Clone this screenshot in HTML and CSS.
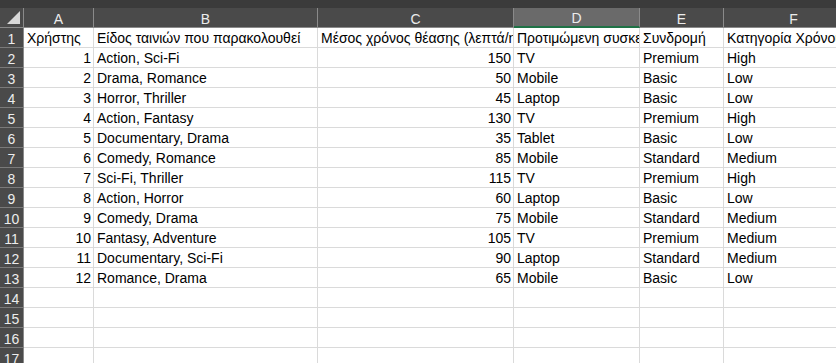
FILE: index.html
```html
<!DOCTYPE html>
<html lang="el">
<head>
  <meta charset="UTF-8" />
  <meta name="viewport" content="width=device-width, initial-scale=1.0"/>
  <title>Sheet1</title>
  <link rel="stylesheet" href="styles.css">
</head>
<body>
  <div class="topbar"></div>
  <div class="sheet" id="sheet">
    <div class="corner"><span class="corner-tri"></span></div>
    <div class="colhead">A</div>
    <div class="colhead">B</div>
    <div class="colhead">C</div>
    <div class="colhead active">D</div>
    <div class="colhead">E</div>
    <div class="colhead">F</div>
  </div>

  <script>
    const rows = [
      ["Χρήστης", "Είδος ταινιών που παρακολουθεί", "Μέσος χρόνος θέασης (λεπτά/ημέρα)", "Προτιμώμενη συσκευή", "Συνδρομή", "Κατηγορία Χρόνου Θέασης"],
      [1, "Action, Sci-Fi", 150, "TV", "Premium", "High"],
      [2, "Drama, Romance", 50, "Mobile", "Basic", "Low"],
      [3, "Horror, Thriller", 45, "Laptop", "Basic", "Low"],
      [4, "Action, Fantasy", 130, "TV", "Premium", "High"],
      [5, "Documentary, Drama", 35, "Tablet", "Basic", "Low"],
      [6, "Comedy, Romance", 85, "Mobile", "Standard", "Medium"],
      [7, "Sci-Fi, Thriller", 115, "TV", "Premium", "High"],
      [8, "Action, Horror", 60, "Laptop", "Basic", "Low"],
      [9, "Comedy, Drama", 75, "Mobile", "Standard", "Medium"],
      [10, "Fantasy, Adventure", 105, "TV", "Premium", "Medium"],
      [11, "Documentary, Sci-Fi", 90, "Laptop", "Standard", "Medium"],
      [12, "Romance, Drama", 65, "Mobile", "Basic", "Low"],
      [], [], [], []
    ];

    const sheet = document.getElementById("sheet");

    rows.forEach((row, i) => {
      const head = document.createElement("div");
      head.className = "rowhead";
      head.textContent = i + 1;
      sheet.appendChild(head);

      for (let c = 0; c < 6; c++) {
        const cell = document.createElement("div");
        const value = row[c];
        cell.className = "cell";
        if (typeof value === "number") cell.classList.add("num");
        cell.textContent = value === undefined ? "" : value;
        sheet.appendChild(cell);
      }
    });
  </script>
</body>
</html>
```

FILE: styles.css
```css
body {
  margin: 0;
  background: #fff;
  font-family: "Liberation Sans", Arial, sans-serif;
  font-size: 14px;
  color: #000;
  overflow: hidden;
}

.topbar {
  height: 8px;
  background: #3b3b3b;
}

.sheet {
  display: grid;
  grid-template-columns: 24px 70px 224px 196px 126px 84px 140px;
  grid-auto-rows: 20px;
  width: 864px;
}

.corner,
.colhead,
.rowhead {
  background: #4a4a4a;
  color: #ececec;
  box-sizing: border-box;
  display: flex;
  align-items: center;
  justify-content: center;
}

.corner {
  border-right: 1px solid #8a8a8a;
  border-bottom: 1px solid #8a8a8a;
  position: relative;
}

.corner-tri {
  position: absolute;
  right: 3px;
  bottom: 3px;
  width: 0;
  height: 0;
  border-left: 13px solid transparent;
  border-bottom: 13px solid #d8d8d8;
}

.colhead {
  border-right: 1px solid #8a8a8a;
  border-bottom: 1px solid #8a8a8a;
  padding-top: 2px;
}

.colhead.active {
  background: #6a6a6a;
  border-bottom: 2px solid #1f7246;
}

.rowhead {
  border-right: 1px solid #8a8a8a;
  border-bottom: 1px solid #7a7a7a;
  padding-top: 2px;
}

.cell {
  box-sizing: border-box;
  border-right: 1px solid #dadada;
  border-bottom: 1px solid #dadada;
  padding: 1px 2px 0 3px;
  line-height: 19px;
  white-space: nowrap;
  overflow: hidden;
}

.cell.num {
  text-align: right;
}
```
